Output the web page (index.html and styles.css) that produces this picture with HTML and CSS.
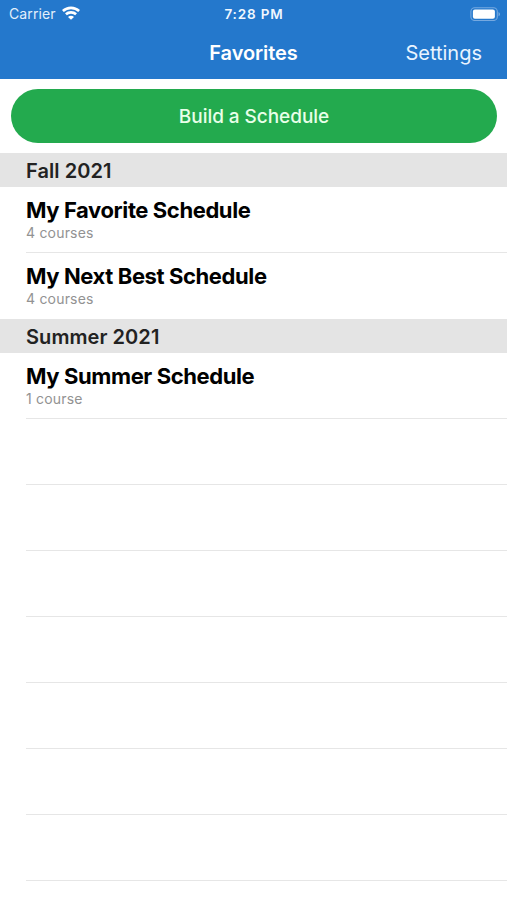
FILE: index.html
```html
<!DOCTYPE html>
<html lang="en">
<head>
<meta charset="utf-8">
<title>Favorites</title>
<link rel="stylesheet" href="styles.css">
</head>
<body>
<header class="top">
  <div class="status">
    <div class="carrier"><span class="carrier-name">Carrier</span>
      <svg class="wifi" viewBox="0 0 18 14" width="18" height="14"><g fill="none" stroke="#fff" stroke-width="2.6"><path d="M.9 5C5.4.8 12.6.8 17.1 5"/><path d="M3.9 8.3C6.7 5.7 11.3 5.7 14.1 8.3"/></g><path d="M9 13.8 6 10.9C7.7 9.4 10.3 9.4 12 10.9Z" fill="#fff"/></svg>
    </div>
    <span class="time">7:28 PM</span>
    <svg class="battery" viewBox="0 0 31 14" width="31" height="14"><rect x=".9" y=".7" width="26.4" height="12.8" rx="3.8" fill="none" stroke="#76a9e0" stroke-width="1.1"/><rect x="2.9" y="2.6" width="22" height="9.2" rx="2" fill="#fff"/><path d="M28.6 4.9C30.2 5.6 30.2 8.6 28.6 9.3Z" fill="#8fb9e6"/></svg>
  </div>
  <nav class="nav">
    <h1 class="title">Favorites</h1>
    <a class="settings">Settings</a>
  </nav>
</header>
<main>
  <div class="action"><button class="build"><span>Build a Schedule</span></button></div>
  <h2 class="section">Fall 2021</h2>
  <ul class="list">
    <li class="row"><strong class="name">My Favorite Schedule</strong><span class="count">4 courses</span></li>
    <li class="row last"><strong class="name">My Next Best Schedule</strong><span class="count">4 courses</span></li>
  </ul>
  <h2 class="section">Summer 2021</h2>
  <ul class="list">
    <li class="row"><strong class="name">My Summer Schedule</strong><span class="count">1 course</span></li>
    <li class="row"></li><li class="row"></li><li class="row"></li><li class="row"></li><li class="row"></li><li class="row"></li><li class="row"></li>
  </ul>
</main>
</body>
</html>
```
FILE: styles.css
```css
* { box-sizing: border-box; margin: 0; padding: 0; }
body { width: 507px; height: 900px; overflow: hidden; background: #fff; font-family: Inter, "Liberation Sans", sans-serif; color: #000; }
.top { height: 79px; background: #2478cc; color: #fff; }
.status { height: 27px; display: grid; grid-template-columns: 1fr auto 1fr; align-items: center; padding: 0 6px 0 9px; }
.carrier { display: flex; align-items: center; gap: 6px; font-size: 14px; letter-spacing: .12px; color: #e3effb; }
.wifi { margin-top: -1px; }
.time { margin-left: -2px; font-size: 13.5px; font-weight: 600; letter-spacing: .85px; color: #f0f7ff; }
.battery { justify-self: end; }
.nav { height: 51px; display: grid; grid-template-columns: 1fr auto 1fr; align-items: center; padding: 0 25px; }
.title { grid-column: 2; font-size: 20px; font-weight: 600; letter-spacing: -.08px; }
.settings { justify-self: end; font-size: 20px; color: #e9f4ff; }
.action { padding: 10px 10px 10px 11px; height: 73.5px; }
.build { display: block; width: 100%; height: 53.5px; padding-top: 1px; border: 0; border-radius: 27px; background: #23aa4e; color: #e8ffe9; font: 500 19px Inter, sans-serif; letter-spacing: -.05px; }
.section { height: 34px; padding-left: 26px; background: #e4e4e4; color: #222; font-size: 20px; font-weight: 600; line-height: 36px; letter-spacing: .07px; }
.list { list-style: none; }
.row { height: 66px; margin-left: 26px; padding-top: 10px; border-bottom: 1px solid #e6e6e6; display: flex; flex-direction: column; align-items: flex-start; }
.last { border-bottom: 0; }
.name { font-size: 22px; font-weight: 700; line-height: 27px; letter-spacing: -.4px; white-space: nowrap; }
.count { font-size: 14px; line-height: 17px; letter-spacing: .2px; color: #929292; }
```
